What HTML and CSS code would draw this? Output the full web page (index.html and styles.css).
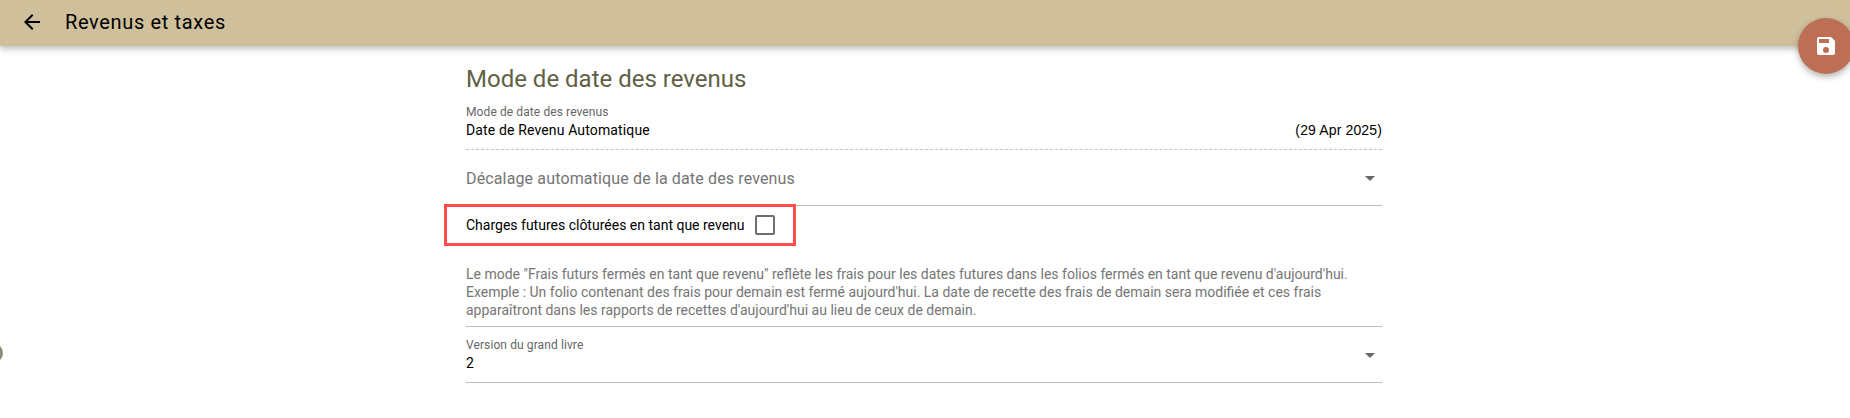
FILE: index.html
```html
<!DOCTYPE html>
<html lang="fr">
<head>
    <meta charset="UTF-8">
    <meta name="viewport" content="width=device-width, initial-scale=1.0">
    <title>Revenus et taxes</title>
    <link rel="stylesheet" href="styles.css">
</head>
<body>
    <header class="toolbar">
        <svg class="back-icon" viewBox="0 0 24 24" width="24" height="24"><path d="M20 11H7.83l5.59-5.59L12 4l-8 8 8 8 1.41-1.41L7.83 13H20v-2z"/></svg>
        <span class="toolbar-title">Revenus et taxes</span>
    </header>

    <button class="fab">
        <svg viewBox="0 0 24 24" width="24" height="24"><path d="M17 3H5a2 2 0 0 0-2 2v14a2 2 0 0 0 2 2h14a2 2 0 0 0 2-2V7l-4-4zm-5 16a3 3 0 1 1 0-6 3 3 0 0 1 0 6zm3-10H5V5h10v4z"/></svg>
    </button>

    <span class="side-dot"></span>

    <main class="content">
        <h2 class="section-title">Mode de date des revenus</h2>

        <div class="field field-readonly">
            <div class="field-label">Mode de date des revenus</div>
            <div class="field-row">
                <span>Date de Revenu Automatique</span>
                <span class="field-date">(29 Apr 2025)</span>
            </div>
        </div>

        <div class="select-empty">
            <span>Décalage automatique de la date des revenus</span>
            <span class="caret"></span>
        </div>

        <div class="check-row">
            <span>Charges futures clôturées en tant que revenu</span>
            <span class="checkbox"></span>
        </div>

        <p class="help">Le mode "Frais futurs fermés en tant que revenu" reflète les frais pour les dates futures dans les folios fermés en tant que revenu d'aujourd'hui.<br>Exemple : Un folio contenant des frais pour demain est fermé aujourd'hui. La date de recette des frais de demain sera modifiée et ces frais<br>apparaîtront dans les rapports de recettes d'aujourd'hui au lieu de ceux de demain.</p>

        <div class="select-filled">
            <div>
                <div class="field-label">Version du grand livre</div>
                <div class="field-value">2</div>
            </div>
            <span class="caret"></span>
        </div>
    </main>
</body>
</html>
```

FILE: styles.css
```css
body {
    margin: 0;
    height: 418px;
    overflow: hidden;
    background: #fff;
    font-family: Roboto, "Liberation Sans", sans-serif;
    color: #000;
}

.toolbar {
    display: flex;
    align-items: center;
    box-sizing: border-box;
    height: 46px;
    padding: 0 0 3px 20px;
    background: #cfbf9b;
    box-shadow: 0 3px 6px rgba(0,0,0,0.25);
}

.back-icon {
    fill: #000;
}

.toolbar-title {
    margin-left: 21px;
    font-size: 20px;
    letter-spacing: 0.65px;
}

.fab {
    position: absolute;
    top: 18px;
    left: 1798px;
    width: 56px;
    height: 56px;
    padding: 0;
    border: none;
    border-radius: 50%;
    background: #bd6f55;
    box-shadow: 0 3px 6px rgba(0,0,0,0.3);
    display: flex;
    align-items: center;
    justify-content: center;
}

.fab svg {
    fill: #fff;
}

.side-dot {
    position: absolute;
    left: -17px;
    top: 343px;
    width: 20px;
    height: 20px;
    border-radius: 50%;
    background: #8b8d80;
}

.content {
    width: 916px;
    margin-left: 466px;
}

.section-title {
    margin: 17px 0 0;
    font-size: 24px;
    font-weight: 400;
    line-height: 32px;
    color: #5f6145;
}

.field-label {
    font-size: 12px;
    line-height: 14px;
    letter-spacing: 0.1px;
    color: #666;
}

.field-readonly {
    margin-top: 10px;
    height: 44px;
    border-bottom: 1px dashed #c4c4c4;
}

.field-row {
    display: flex;
    justify-content: space-between;
    margin-top: 2px;
    font-size: 14px;
    line-height: 19px;
    letter-spacing: 0.14px;
}

.field-date {
    font-family: "Liberation Sans", sans-serif;
}

.select-empty {
    display: flex;
    align-items: center;
    justify-content: space-between;
    box-sizing: border-box;
    height: 56px;
    padding-top: 2px;
    border-bottom: 1px solid #bbb;
    font-size: 16px;
    letter-spacing: 0.14px;
    color: #757575;
}

.caret {
    width: 0;
    height: 0;
    margin-right: 7px;
    border-left: 5px solid transparent;
    border-right: 5px solid transparent;
    border-top: 5px solid #666;
}

.check-row {
    display: flex;
    align-items: center;
    box-sizing: border-box;
    width: 352px;
    height: 42px;
    margin: -2px 0 0 -22px;
    padding-left: 19px;
    border: 3px solid #ff4d4d;
    font-size: 14px;
}

.checkbox {
    width: 16px;
    height: 16px;
    margin-left: 10px;
    border: 2px solid #6e6e6e;
    border-radius: 2px;
}

.help {
    margin: 19px 0 0;
    padding-bottom: 7px;
    border-bottom: 1px solid #bbb;
    font-size: 14px;
    line-height: 18px;
    color: #757575;
}

.select-filled {
    display: flex;
    align-items: center;
    justify-content: space-between;
    box-sizing: border-box;
    height: 56px;
    padding-top: 2px;
    border-bottom: 1px solid #bbb;
}

.field-value {
    margin-top: 2px;
    font-size: 14px;
    line-height: 19px;
}
```
